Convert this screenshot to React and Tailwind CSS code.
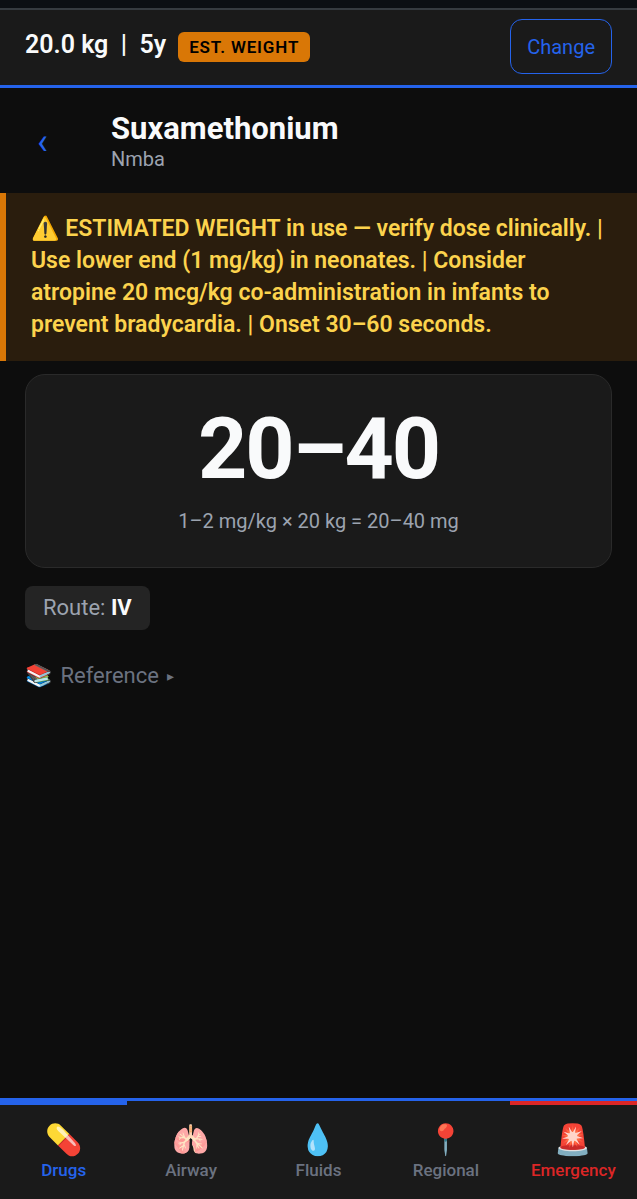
import clsx from "clsx";

const TABS = [
  { id: "drugs", label: "Drugs", icon: "💊", active: true },
  { id: "airway", label: "Airway", icon: "🫁" },
  { id: "fluids", label: "Fluids", icon: "💧" },
  { id: "regional", label: "Regional", icon: "📍" },
  { id: "emergency", label: "Emergency", icon: "🚨", danger: true },
];

function PatientBar({ weight, age }) {
  return (
    <header className="flex items-start justify-between border-t-2 border-b-3 border-t-[#353b40] border-b-[#2563eb] bg-[#1a1a1a] px-[25px] pt-[9px] pb-[11px]">
      <div className="flex items-baseline pt-2">
        <span className="text-[25px] leading-9 font-semibold whitespace-pre text-[#f9fafb]">{`${weight} kg  |  ${age}`}</span>
        <span className="ml-3 rounded-md bg-[#d97706] px-[11px] py-1 text-[17px] leading-[22px] font-semibold tracking-wider text-black">
          EST. WEIGHT
        </span>
      </div>
      <button type="button" className="h-[55px] rounded-xl border border-[#2563eb] px-4 text-xl text-[#2563eb]">
        Change
      </button>
    </header>
  );
}

function DrugHeader({ name, category }) {
  return (
    <div className="flex items-center px-[25px] pt-[21px] pb-[23px]">
      <button type="button" aria-label="Back" className="mr-3 w-[74px] pt-1 pl-3 text-left text-4xl text-[#2563eb]">
        ‹
      </button>
      <div>
        <h1 className="text-[31px] leading-10 font-bold text-[#f9fafb]">{name}</h1>
        <p className="text-xl leading-[21px] text-[#9ca3af]">{category}</p>
      </div>
    </div>
  );
}

function TabLink({ tab }) {
  return (
    <a
      href={`#${tab.id}`}
      aria-current={tab.active ? "page" : undefined}
      className={clsx(
        "flex flex-1 flex-col items-center border-t-4 pt-[17px] pb-[17px]",
        tab.active && "border-[#2563eb] text-[#2563eb]",
        tab.danger && "border-[#dc2626] text-[#dc2626]",
        !tab.active && !tab.danger && "border-transparent text-[#6b7280]"
      )}
    >
      <span className="text-3xl leading-9">{tab.icon}</span>
      <span className="text-[17px] leading-6 font-medium">{tab.label}</span>
    </a>
  );
}

export default function App() {
  return (
    <div className="flex min-h-screen flex-col bg-[#0d0d0d] font-['Roboto','Noto_Color_Emoji',sans-serif]">
      <div className="h-2 bg-[#0b0f13]" />
      <PatientBar weight="20.0" age="5y" />

      <main className="flex-1">
        <DrugHeader name="Suxamethonium" category="Nmba" />

        <div role="alert" className="border-l-6 border-[#d97706] bg-[#2a1d0d] py-5 pr-6 pl-[25px] text-[23px] leading-8 font-semibold text-[#fcd34d]">
          ⚠️ ESTIMATED WEIGHT in use — verify dose clinically. | Use lower end (1 mg/kg) in neonates. |
          Consider atropine 20 mcg/kg co-administration in infants to prevent bradycardia. | Onset 30–60 seconds.
        </div>

        {/* Calculated dose */}
        <section className="mx-[25px] mt-[13px] rounded-[20px] border border-[#2a2a2a] bg-[#1a1a1a] px-6 pt-[30px] pb-8 text-center">
          <div className="text-[86px] leading-[88px] font-bold tracking-tight text-[#f9fafb]">20–40</div>
          <p className="mt-[14px] text-xl leading-7 text-[#9ca3af]">1–2 mg/kg × 20 kg = 20–40 mg</p>
        </section>

        <div className="mx-[25px] mt-[18px] w-fit rounded-lg bg-[#242424] px-[18px] py-2 text-[22px] leading-7 text-[#9ca3af]">
          Route: <strong className="font-bold text-[#f9fafb]">IV</strong>
        </div>

        <button type="button" className="mx-[25px] mt-8 flex items-center text-[22px] leading-7 text-[#6b7280]">
          <span className="mr-2">📚</span>
          Reference
          <span className="ml-2 text-sm">▸</span>
        </button>
      </main>

      <nav className="flex border-t-3 border-[#2563eb] bg-[#1a1a1a]">
        {TABS.map((tab) => <TabLink key={tab.id} tab={tab} />)}
      </nav>
    </div>
  );
}
